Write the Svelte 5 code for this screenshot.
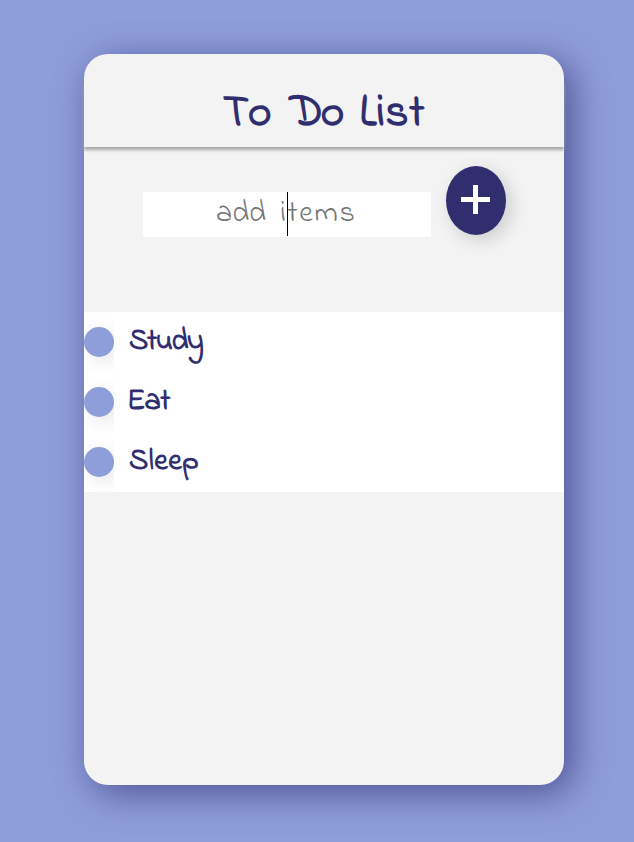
<script>
  let draft = $state('');
  let items = $state(['Study', 'Eat', 'Sleep']);

  const tracking = { Study: -1.3, Eat: -0.6, Sleep: 0.5 };

  function add() {
    const text = draft.trim();
    if (!text) return;
    items.push(text);
    draft = '';
  }
</script>

<main>
  <section class="card">
    <h1><span class="to">To</span> <span class="do">Do</span> <span class="list">List</span></h1>
    <div class="entry">
      <div class="field">
        <input bind:value={draft} aria-label="add items" />
        {#if !draft}
          <div class="hint"><span class="verb">add</span> <span class="noun">items</span></div>
        {/if}
        <span class="caret"></span>
      </div>
      <button onclick={add} aria-label="Add">
        <svg width="29" height="29" viewBox="0 0 29 29" shape-rendering="crispEdges">
          <path d="M12 0h5v12h12v5H17v12h-5V17H0v-5h12z" fill="#fff" />
        </svg>
      </button>
    </div>
    <ul>
      {#each items as item}
        <li>
          <span class="check"><i></i></span>
          <span class="label" class:tight={item.startsWith('E')} style:letter-spacing="{tracking[item] ?? 0}px">{item}</span>
        </li>
      {/each}
    </ul>
  </section>
</main>

<style>
  :global(body) {
    margin: 0;
    background: #8e9edb;
  }
  main {
    box-sizing: border-box;
    height: 842px;
    padding: 54px 0 0 84px;
    overflow: hidden;
    font-family: 'Indie Flower', 'Comic Neue', 'Comic Sans MS', Lato, sans-serif;
    color: #312e70;
  }
  .card {
    box-sizing: border-box;
    width: 480px;
    height: 731px;
    padding-top: 28px;
    border-radius: 24px;
    background: #f3f3f3;
    box-shadow: 8px 8px 36px rgba(49, 46, 112, 0.68);
  }
  h1 {
    height: 65px;
    margin: 0;
    line-height: 65px;
    text-align: center;
    font-size: 45px;
    font-weight: 700;
    background: #f3f3f3;
    box-shadow: 0 3px 3px #a6a6a6;
  }
  .to {
    letter-spacing: 1px;
    margin-right: 6px;
  }
  .do {
    letter-spacing: -2px;
    margin-right: 6px;
  }
  .list {
    letter-spacing: 0.7px;
  }
  .entry {
    display: flex;
    align-items: flex-start;
    height: 165px;
    padding-left: 59px;
  }
  .field {
    position: relative;
    width: 288px;
    height: 45px;
    margin-top: 45px;
    background: #fff;
  }
  input {
    box-sizing: border-box;
    width: 100%;
    height: 44px;
    padding: 0;
    border: 0;
    outline: 0;
    background: transparent;
    color: #312e70;
    text-align: center;
    font-family: inherit;
    font-size: 30px;
  }
  .hint {
    position: absolute;
    inset: 0;
    padding-left: 73px;
    line-height: 44px;
    font-size: 30px;
    color: #757575;
    white-space: nowrap;
    pointer-events: none;
  }
  .verb {
    margin-right: 7px;
  }
  .noun {
    letter-spacing: 1.7px;
  }
  .caret {
    position: absolute;
    left: 144px;
    top: 0;
    width: 1px;
    height: 44px;
    background: #000;
  }
  button {
    display: grid;
    place-items: center;
    width: 60px;
    height: 69px;
    margin: 19px 0 0 15px;
    padding: 0 1px 2px 0;
    border: 0;
    border-radius: 50%;
    background: #312e70;
    box-shadow: 5px 5px 18px rgba(0, 0, 0, 0.16);
  }
  ul {
    margin: 0;
    padding: 0;
    list-style: none;
    background: #fff;
  }
  li {
    display: flex;
    align-items: center;
    height: 60px;
  }
  .check {
    display: grid;
    place-items: center;
    width: 30px;
    height: 60px;
    overflow: hidden;
  }
  .check i {
    width: 30px;
    height: 30px;
    border-radius: 50%;
    background: #8e9edb;
    box-shadow: 5px 5px 20px rgba(0, 0, 0, 0.1);
  }
  .label {
    margin: 0 0 0 15px;
    font-size: 30px;
    font-weight: 700;
    line-height: 44px;
  }
  .label.tight {
    margin-left: 13px;
  }
</style>
